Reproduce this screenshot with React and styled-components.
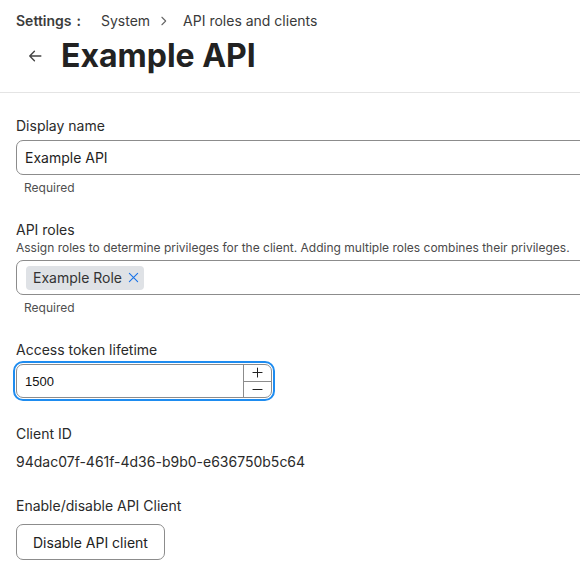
import React from 'react'
import styled, { createGlobalStyle } from 'styled-components'

const GlobalStyle = createGlobalStyle`
  html, body {
    margin: 0;
    padding: 0;
    background: #fff;
    overflow: hidden;
  }
  body {
    font-family: Inter, "Noto Sans", "Liberation Sans", sans-serif;
    color: #1f1f1f;
  }
  * {
    box-sizing: border-box;
  }
`

const Page = styled.div`
  width: 580px;
  display: flex;
  flex-direction: column;
`

const Header = styled.header`
  padding: 12px 16px 20px;
  border-bottom: 1px solid #e4e4e4;
`

const Crumbs = styled.nav`
  display: flex;
  align-items: center;
  font-size: 14px;
  line-height: 18px;
  color: #3a3a3a;
`

const CrumbRoot = styled.span`
  font-weight: 600;
  color: #3c3c3c;
  margin-right: 20px;
`

const Colon = styled.span`
  margin-left: 5px;
`

const Chevron = styled.span`
  display: inline-flex;
  color: #666;
  margin: 0 14px 0 9px;
`

const TitleRow = styled.div`
  display: flex;
  align-items: center;
  gap: 19px;
  margin-top: 10px;
  padding-left: 12px;
`

const BackButton = styled.button`
  border: none;
  background: none;
  padding: 0;
  display: inline-flex;
  color: #444;
  cursor: pointer;
`

const Title = styled.h1`
  margin: 0;
  font-size: 32px;
  line-height: 32px;
  font-weight: 700;
  color: #222;
`

const Form = styled.form`
  display: flex;
  flex-direction: column;
  padding: 24px 16px 0;
`

const Field = styled.div`
  display: flex;
  flex-direction: column;
  margin-bottom: ${(p) => p.gap || 20}px;
`

const Label = styled.label`
  font-size: 14px;
  line-height: 18px;
  color: #2a2a2a;
  margin-bottom: 5px;
`

const Description = styled.div`
  font-size: 12px;
  line-height: 16px;
  color: #4a4a4a;
  margin-top: -4px;
  margin-bottom: 4px;
  white-space: nowrap;
`

const Box = styled.div`
  width: 640px;
  height: 35px;
  border: 1px solid #8c8c8c;
  border-radius: 7px;
  display: flex;
  align-items: center;
  padding: 0 5px 0 8px;
  font-size: 14px;
  color: #1f1f1f;
`

const TextInput = styled.input`
  border: none;
  outline: none;
  font: inherit;
  color: inherit;
  padding: 0;
  width: 100%;
  background: transparent;
`

const Hint = styled.div`
  font-size: 12px;
  line-height: 16px;
  color: #4f4f4f;
  margin: 5px 0 0 8px;
`

const Tag = styled.span`
  display: inline-flex;
  align-items: center;
  gap: 6px;
  height: 24px;
  padding: 0 5px 0 7px;
  margin-left: 1px;
  border-radius: 4px;
  background: #dfe2e6;
  font-size: 14px;
  color: #333;
`

const TagRemove = styled.button`
  border: none;
  background: none;
  padding: 0;
  display: inline-flex;
  color: #1a73e8;
  cursor: pointer;
`

const NumberBox = styled.div`
  display: flex;
  width: 256px;
  height: 34px;
  border: 1px solid #8c8c8c;
  border-radius: 7px;
  outline: 2px solid #1e8cf0;
  outline-offset: 1px;
  overflow: hidden;
`

const NumberInput = styled.input`
  flex: 1;
  border: none;
  outline: none;
  padding: 0 8px;
  font-family: "Liberation Sans", Arial, sans-serif;
  font-size: 13px;
  color: #111;
  background: transparent;
  min-width: 0;
`

const Stepper = styled.div`
  width: 28px;
  display: flex;
  flex-direction: column;
  border-left: 1px solid #8c8c8c;
`

const StepButton = styled.button`
  flex: 1;
  border: none;
  background: none;
  padding: 0;
  display: flex;
  align-items: center;
  justify-content: center;
  color: #222;
  border-top: ${(p) => (p.divided ? '1px solid #8c8c8c' : 'none')};
  cursor: pointer;
`

const Value = styled.div`
  font-size: 14px;
  line-height: 18px;
  color: #2a2a2a;
  margin-top: 5px;
`

const Button = styled.button`
  align-self: flex-start;
  height: 36px;
  padding: 0 16px;
  margin-top: 4px;
  border: 1px solid #8c8c8c;
  border-radius: 7px;
  background: #fff;
  font-family: inherit;
  font-size: 14px;
  color: #222;
  cursor: pointer;
`

const Icon = ({ children, size = 12, stroke = 1.3 }) => (
  <svg width={size} height={size} viewBox="0 0 12 12" fill="none" stroke="currentColor" strokeWidth={stroke} strokeLinecap="round" strokeLinejoin="round">
    {children}
  </svg>
)

export default function App() {
  return (
    <Page>
      <GlobalStyle />
      <Header>
        <Crumbs>
          <CrumbRoot>Settings<Colon>:</Colon></CrumbRoot>
          <span>System</span>
          <Chevron>
            <Icon size={10}><path d="M3.5 1.5 8 6l-4.5 4.5" /></Icon>
          </Chevron>
          <span>API roles and clients</span>
        </Crumbs>
        <TitleRow>
          <BackButton aria-label="Back">
            <Icon size={14} stroke={1.2}><path d="M11 6H1.5M5.5 2 1.5 6l4 4" /></Icon>
          </BackButton>
          <Title>Example API</Title>
        </TitleRow>
      </Header>

      <Form onSubmit={(e) => e.preventDefault()}>
        <Field gap={25}>
          <Label htmlFor="displayName">Display name</Label>
          <Box>
            <TextInput id="displayName" defaultValue="Example API" />
          </Box>
          <Hint>Required</Hint>
        </Field>

        <Field gap={25}>
          <Label>API roles</Label>
          <Description>Assign roles to determine privileges for the client. Adding multiple roles combines their privileges.</Description>
          <Box>
            <Tag>
              Example Role
              <TagRemove type="button" aria-label="Remove">
                <Icon size={11} stroke={1.2}><path d="M1.5 1.5l9 9M10.5 1.5l-9 9" /></Icon>
              </TagRemove>
            </Tag>
          </Box>
          <Hint>Required</Hint>
        </Field>

        <Field gap={27}>
          <Label htmlFor="lifetime">Access token lifetime</Label>
          <NumberBox>
            <NumberInput id="lifetime" defaultValue="1500" />
            <Stepper>
              <StepButton type="button" aria-label="Increase">
                <Icon size={11} stroke={1.1}><path d="M6 1v10M1 6h10" /></Icon>
              </StepButton>
              <StepButton type="button" divided aria-label="Decrease">
                <Icon size={11} stroke={1.1}><path d="M1 6h10" /></Icon>
              </StepButton>
            </Stepper>
          </NumberBox>
        </Field>

        <Field gap={26}>
          <Label>Client ID</Label>
          <Value>94dac07f-461f-4d36-b9b0-e636750b5c64</Value>
        </Field>

        <Field>
          <Label>Enable/disable API Client</Label>
          <Button type="button">Disable API client</Button>
        </Field>
      </Form>
    </Page>
  )
}
